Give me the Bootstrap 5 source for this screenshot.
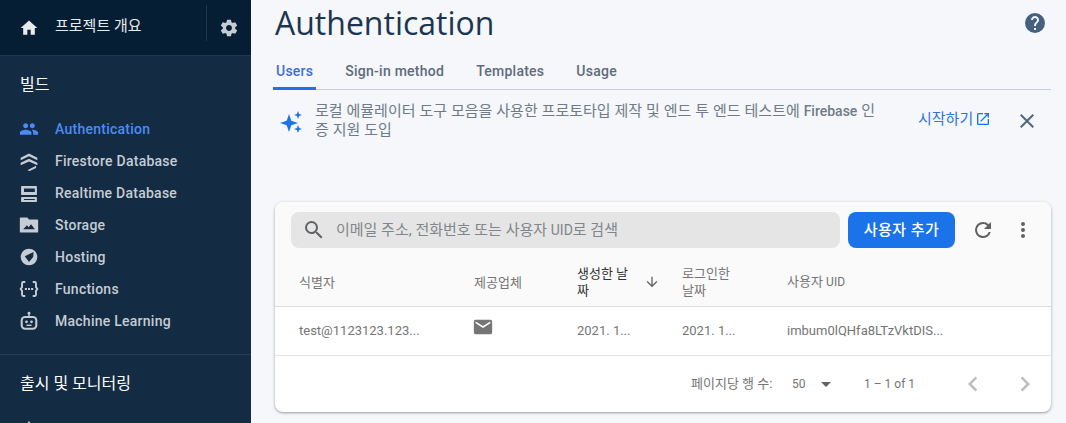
<!DOCTYPE html>
<html lang="ko">
<head>
<meta charset="utf-8">
<link href="https://cdn.jsdelivr.net/npm/bootstrap@5.3.0/dist/css/bootstrap.min.css" rel="stylesheet">
<style>
html,body{height:423px;overflow:hidden;}
body{font-family:Roboto,"Noto Sans CJK KR",sans-serif;background:#f5f7fa;color:#5f6368;}
.app-shell{height:423px;}
.side{width:251px;background:#132b43;flex:none;overflow:hidden;height:423px;}
.side-head{height:56px;background:#051e34;border-bottom:1px solid #1f3850;padding-left:19px;}
.head-label{color:#e8eaed;font-size:15px;margin-left:16px;width:151px;margin-top:-3px;white-space:nowrap;}
.head-sep{width:1px;height:36px;background:#1f3850;margin-right:12px;margin-top:-9px;}
.side-title{color:#fff;font-size:16px;line-height:20px;padding-left:20px;}
.side-build{margin-top:19px;margin-bottom:18px;}
.side-item{height:32px;padding-left:19px;color:#c6ccd3;font-size:14px;font-weight:500;letter-spacing:.25px;}
.side-item svg{flex:none;margin-right:16px;}
.side-item.is-on{color:#4c8bf5;}
.side-rule{border-top:1px solid #263f57;margin-top:17px;}
.side-ship{margin-top:19px;margin-bottom:20px;}
.main-col{width:815px;padding:0 15px 0 24px;}
.title-row{height:46px;}
.help-ico{margin-right:4px;}
.page-title{font-family:"Open Sans",Roboto,sans-serif;font-size:32px;font-weight:400;color:#1c3550;margin:0;line-height:46px;}
.tab-row{height:44px;border-bottom:1px solid #c3ccd7;margin-left:-2px;}
.tab-link{font-size:14px;font-weight:500;letter-spacing:.25px;color:#5f6b7a;padding:7px 16px 0;height:44px;display:flex;align-items:center;text-decoration:none;}
.tab-link.is-on{color:#3c6fdb;border-bottom:3px solid #1a73e8;padding:9px 3px 0;margin-right:13px;}
.tip-row{height:112px;padding:12px 0 0 4px;}
.tip-ico{margin-top:7px;flex:none;}
.tip-text{width:566px;font-size:15px;line-height:19px;color:#6f7b88;margin-left:12px;word-spacing:.2px;}
.latin{font-size:14px;}
.tip-link{color:#2f74e0;font-size:15px;line-height:22px;margin-left:37px;margin-top:6px;white-space:nowrap;}
.tip-link svg{margin-left:2px;}
.tip-close{margin-left:24px;margin-top:7px;flex:none;}
.user-card{background:#fff;border-radius:8px;box-shadow:0 1px 2px rgba(60,64,67,.35),0 1px 3px 1px rgba(60,64,67,.12);height:210px;overflow:hidden;}
.card-top{background:#fafafa;height:105px;}
.tool-row{height:46px;padding:10px 0 0 16px;}
.search-box{width:549px;height:36px;background:#e5e5e5;border-radius:8px;padding-left:11px;color:#80868b;font-size:15px;}
.search-box span{margin-left:10px;}
.add-btn{background:#1a73e8;color:#fff;border:0;border-radius:8px;width:107px;height:36px;font-size:15px;font-weight:500;letter-spacing:.5px;margin-left:8px;padding:0;}
.tool-ico{margin-left:16px;flex:none;}
.tbl-head{height:59px;padding-top:10px;border-bottom:1px solid #ddd;font-size:13px;line-height:17px;color:#757575;}
.tbl-head .latin{font-size:12px;}
.tbl-row{height:49px;border-bottom:1px solid #e3e3e3;font-size:13px;color:#757575;}
.c1{width:199px;padding-left:24px;}
.c2{width:103px;}
.c2 svg{display:block;margin:-8px 0 0 -2px;}
.c3{width:105px;}
.c4{width:105px;}
.date-head{color:#333;width:55px;flex:none;}
.sort-ico{margin-left:12px;flex:none;}
.login-head{width:54px;}
.pager{height:56px;font-size:12px;color:#757575;}
.pg-rows{margin-left:416px;width:101px;font-size:13px;white-space:nowrap;}
.pg-val{width:72px;}
.pg-val svg{margin-left:8px;}
.pg-range{width:94px;}
.pg-next{margin-left:22px;}
</style>
</head>
<body>
<div class="app-shell d-flex">
<aside class="side">
  <div class="side-head d-flex align-items-center">
    <svg width="20" height="20" viewBox="0 0 24 24" fill="#e8eaed"><path d="M10 20v-6h4v6h5v-8h3L12 3 2 12h3v8z"/></svg>
    <div class="head-label">프로젝트 개요</div>
    <div class="head-sep"></div>
    <svg width="20" height="20" viewBox="0 0 24 24" fill="#c6ccd3"><path d="M19.43 12.98c.04-.32.07-.64.07-.98s-.03-.66-.07-.98l2.11-1.65c.19-.15.24-.42.12-.64l-2-3.46c-.12-.22-.39-.3-.61-.22l-2.49 1c-.52-.4-1.08-.73-1.69-.98l-.38-2.65C14.46 2.18 14.25 2 14 2h-4c-.25 0-.46.18-.49.42l-.38 2.65c-.61.25-1.17.59-1.69.98l-2.49-1c-.23-.09-.49 0-.61.22l-2 3.46c-.13.22-.07.49.12.64l2.11 1.65c-.04.32-.07.65-.07.98s.03.66.07.98l-2.11 1.65c-.19.15-.24.42-.12.64l2 3.46c.12.22.39.3.61.22l2.49-1c.52.4 1.08.73 1.69.98l.38 2.65c.03.24.24.42.49.42h4c.25 0 .46-.18.49-.42l.38-2.65c.61-.25 1.17-.59 1.69-.98l2.49 1c.23.09.49 0 .61-.22l2-3.46c.12-.22.07-.49-.12-.64l-2.11-1.65zM12 15.5c-1.93 0-3.5-1.57-3.5-3.5s1.57-3.5 3.5-3.5 3.5 1.57 3.5 3.5-1.57 3.5-3.5 3.5z"/></svg>
  </div>
  <div class="side-title side-build">빌드</div>
  <div class="side-item is-on d-flex align-items-center">
    <svg width="20" height="20" viewBox="0 0 24 24" fill="#4c8bf5"><path d="M16 11c1.66 0 2.99-1.34 2.99-3S17.66 5 16 5s-3 1.34-3 3 1.34 3 3 3zm-8 0c1.66 0 2.99-1.34 2.99-3S9.66 5 8 5 5 6.34 5 8s1.34 3 3 3zm0 2c-2.33 0-7 1.17-7 3.5V19h14v-2.5C15 14.17 10.33 13 8 13zm8 0c-.29 0-.62.02-.97.05 1.16.84 1.97 1.97 1.97 3.45V19h6v-2.5c0-2.33-4.67-3.5-7-3.5z"/></svg>Authentication</div>
  <div class="side-item d-flex align-items-center">
    <svg width="20" height="20" viewBox="0 0 24 24" fill="#c6ccd3"><path d="M12 3 22 8v3.200L12 6.300 2 11.200V8zM12 9.200 22 14v3.200L12 12.500 2 17.200V14zM10 23 20.500 17.800V20.300L13 24z"/></svg>Firestore Database</div>
  <div class="side-item d-flex align-items-center">
    <svg width="20" height="20" viewBox="0 0 24 24" fill="#c6ccd3"><path fill-rule="evenodd" d="M3.500 3.600h17a1 1 0 0 1 1 1v8.800a1 1 0 0 1-1 1h-17a1 1 0 0 1-1-1V4.600a1 1 0 0 1 1-1zM6 6.600v4.200h13V6.600zM3.500 16.800h17a1 1 0 0 1 1 1v4a1 1 0 0 1-1 1h-17a1 1 0 0 1-1-1v-4a1 1 0 0 1 1-1zM6 19.200v1.200h13v-1.200z"/></svg>Realtime Database</div>
  <div class="side-item d-flex align-items-center">
    <svg width="20" height="20" viewBox="0 0 24 24" fill="#c6ccd3"><path fill-rule="evenodd" d="M2 3h8l2 2.500h10a1 1 0 0 1 1 1V20a1 1 0 0 1-1 1H2a1 1 0 0 1-1-1V4a1 1 0 0 1 1-1zm3 14h14l-4.500-6-3 3.600-2-2.300z"/></svg>Storage</div>
  <div class="side-item d-flex align-items-center">
    <svg width="20" height="20" viewBox="0 0 24 24" fill="#c6ccd3"><path fill-rule="evenodd" d="M12 2a10 10 0 1 0 0 20 10 10 0 0 0 0-20zM7 11 17.500 6 17 12l-5 6z"/></svg>Hosting</div>
  <div class="side-item d-flex align-items-center">
    <svg width="20" height="20" viewBox="0 0 24 24" fill="#c6ccd3"><path d="M2.500 5a2.500 2.500 0 0 1 2.500-2.500h2.500v2.300H5.500a.7.7 0 0 0-.7.7v4.700L3.300 12l1.500 1.800v4.700c0 .4.3.7.7.7h2v2.300H5A2.500 2.500 0 0 1 2.500 19v-4.300L.6 12l1.900-2.700zM21.500 5A2.500 2.500 0 0 0 19 2.500h-2.500v2.300h2a.7.7 0 0 1 .7.7v4.700l1.500 1.800-1.500 1.800v4.700c0 .4-.3.700-.7.700h-2v2.300H19a2.500 2.500 0 0 0 2.500-2.500v-4.300l1.900-2.700-1.900-2.700zM7 10.800h2.500v2.400H7zM10.800 10.800h2.400v2.400h-2.400zM14.500 10.800H17v2.400h-2.500z"/></svg>Functions</div>
  <div class="side-item d-flex align-items-center">
    <svg width="20" height="20" viewBox="0 0 24 24" fill="#c6ccd3"><circle cx="12" cy="2.600" r="1.700"/><rect x="11.100" y="3" width="1.800" height="4"/><rect x="2" y="6" width="20" height="16.500" rx="5.500"/><rect x="4.500" y="8.500" width="15" height="11.500" rx="2.500" fill="#132b43"/><circle cx="9" cy="13" r="1.700"/><circle cx="15" cy="13" r="1.700"/><rect x="9" y="16.300" width="6" height="1.700"/></svg>Machine Learning</div>
  <div class="side-rule"></div>
  <div class="side-title side-ship">출시 및 모니터링</div>
  <div class="side-item d-flex align-items-center"><svg width="20" height="20" viewBox="0 0 24 24" fill="#c6ccd3"><path d="M12 1 8 8h8zM6 10h12v12H6z"/></svg>Crashlytics</div>
</aside>
<main class="main-col">
  <div class="title-row d-flex align-items-center justify-content-between">
    <h1 class="page-title">Authentication</h1>
    <svg class="help-ico" width="24" height="24" viewBox="0 0 24 24" fill="#46607f"><path d="M12 2a10 10 0 1 0 0 20 10 10 0 0 0 0-20zm1 17h-2v-2h2zm2.070-7.750-.9.920C13.450 12.900 13 13.500 13 15h-2v-.5c0-1.100.45-2.100 1.170-2.830l1.240-1.260c.37-.36.590-.86.590-1.410 0-1.100-.9-2-2-2s-2 .9-2 2H8c0-2.210 1.790-4 4-4s4 1.790 4 4c0 .88-.36 1.680-.93 2.250z"/></svg>
  </div>
  <div class="tab-row d-flex">
    <a class="tab-link is-on">Users</a>
    <a class="tab-link">Sign-in method</a>
    <a class="tab-link">Templates</a>
    <a class="tab-link">Usage</a>
  </div>
  <div class="tip-row d-flex align-items-start">
    <svg class="tip-ico" width="24" height="24" viewBox="0 0 24 24" fill="#1a73e8"><path d="M10 5l2.300 6.700L19 14l-6.700 2.300L10 23l-2.300-6.700L1 14l6.700-2.300zM19 2l1.100 2.900L23 6l-2.900 1.100L19 10l-1.100-2.900L15 6l2.900-1.100zM19 16l1.100 2.900 2.900 1.100-2.900 1.100L19 24l-1.100-2.900L15 20l2.900-1.100z"/></svg>
    <div class="tip-text">로컬 에뮬레이터 도구 모음을 사용한 프로토타입 제작 및 엔드 투 엔드 테스트에 <b class="latin fw-medium">Firebase</b> 인증 지원 도입</div>
    <div class="tip-link d-flex align-items-center">시작하기<svg width="16" height="16" viewBox="0 0 24 24" fill="#1a73e8"><path d="M19 19H5V5h7V3H5a2 2 0 0 0-2 2v14a2 2 0 0 0 2 2h14a2 2 0 0 0 2-2v-7h-2zM14 3v2h3.590l-9.830 9.830 1.410 1.410L19 6.410V10h2V3z"/></svg></div>
    <svg class="tip-close" width="24" height="24" viewBox="0 0 24 24" fill="#54667a"><path d="M19 6.410 17.590 5 12 10.590 6.410 5 5 6.410 10.590 12 5 17.590 6.410 19 12 13.410 17.590 19 19 17.590 13.410 12z"/></svg>
  </div>
  <div class="user-card">
    <div class="card-top">
      <div class="tool-row d-flex align-items-center">
        <div class="search-box d-flex align-items-center">
          <svg width="24" height="24" viewBox="0 0 24 24" fill="#5f6368"><path d="M15.500 14h-.79l-.28-.27A6.470 6.470 0 0 0 16 9.500 6.500 6.500 0 1 0 9.500 16c1.610 0 3.090-.59 4.230-1.570l.27.280v.790l5 4.990L20.490 19zm-6 0C7.010 14 5 11.990 5 9.500S7.010 5 9.500 5 14 7.010 14 9.500 11.990 14 9.500 14z"/></svg>
          <span>이메일 주소, 전화번호 또는 사용자 <i class="latin fst-normal">UID</i>로 검색</span>
        </div>
        <button class="add-btn">사용자 추가</button>
        <svg class="tool-ico" width="24" height="24" viewBox="0 0 24 24" fill="#616161"><path d="M17.650 6.350A7.960 7.960 0 0 0 12 4a8 8 0 1 0 7.730 10h-2.080A6 6 0 1 1 12 6c1.660 0 3.140.69 4.220 1.780L13 11h7V4z"/></svg>
        <svg class="tool-ico" width="24" height="24" viewBox="0 0 24 24" fill="#616161"><path d="M12 8a2 2 0 1 0 0-4 2 2 0 0 0 0 4zm0 2a2 2 0 1 0 0 4 2 2 0 0 0 0-4zm0 6a2 2 0 1 0 0 4 2 2 0 0 0 0-4z"/></svg>
      </div>
      <div class="tbl-head d-flex align-items-center">
        <div class="c1">식별자</div>
        <div class="c2">제공업체</div>
        <div class="c3 d-flex align-items-center"><div class="date-head">생성한 날짜</div><svg class="sort-ico" width="16" height="16" viewBox="0 0 24 24" fill="#616161"><path d="M20 12l-1.410-1.410L13 16.170V4h-2v12.170l-5.580-5.590L4 12l8 8z"/></svg></div>
        <div class="c4"><div class="login-head">로그인한 날짜</div></div>
        <div>사용자 <span class="latin">UID</span></div>
      </div>
    </div>
    <div class="tbl-row d-flex align-items-center">
      <div class="c1">test@1123123.123...</div>
      <div class="c2"><svg width="22" height="22" viewBox="0 0 24 24" fill="#757575"><path d="M20 4H4a2 2 0 0 0-2 2v12a2 2 0 0 0 2 2h16a2 2 0 0 0 2-2V6a2 2 0 0 0-2-2zm0 4-8 5-8-5V6l8 5 8-5z"/></svg></div>
      <div class="c3">2021. 1...</div>
      <div class="c4">2021. 1...</div>
      <div>imbum0lQHfa8LTzVktDIS...</div>
    </div>
    <div class="pager d-flex align-items-center">
      <div class="pg-rows">페이지당 행 수:</div>
      <div class="pg-val d-flex align-items-center">50<svg width="24" height="24" viewBox="0 0 24 24" fill="#616161"><path d="M7 10l5 5 5-5z"/></svg></div>
      <div class="pg-range">1 – 1 of 1</div>
      <svg width="30" height="30" viewBox="0 0 24 24" fill="#bdbdbd"><path d="M15.410 7.410 14 6l-6 6 6 6 1.410-1.410L10.830 12z"/></svg>
      <svg class="pg-next" width="30" height="30" viewBox="0 0 24 24" fill="#bdbdbd"><path d="M10 6 8.590 7.410 13.170 12l-4.580 4.590L10 18l6-6z"/></svg>
    </div>
  </div>
</main>
</div>
<script src="https://cdn.jsdelivr.net/npm/bootstrap@5.3.0/dist/js/bootstrap.bundle.min.js"></script>
</body>
</html>
